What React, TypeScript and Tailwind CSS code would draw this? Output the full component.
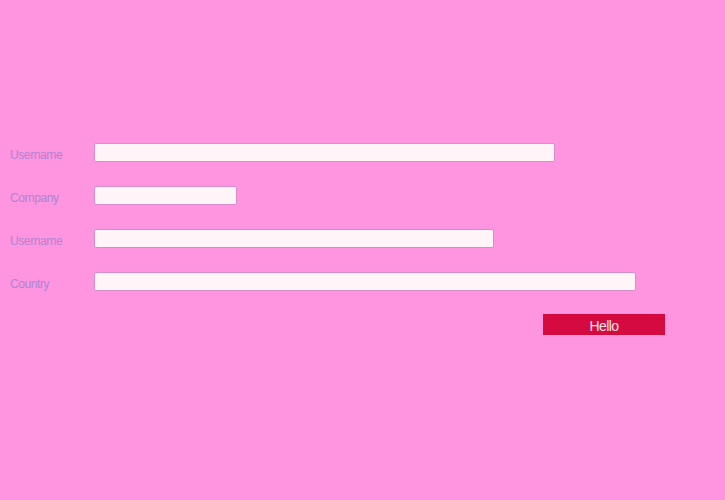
import React from "react";

const rows = [
  { label: "Username", w: "w-[461px]" },
  { label: "Company", w: "w-[143px]" },
  { label: "Username", w: "w-[400px]" },
  { label: "Country", w: "w-[542px]" },
];

export default function App() {
  return (
    <div className="w-[725px] h-[500px] bg-[#ff94e0] pt-[143px] pl-[10px]" style={{ fontFamily: '"Liberation Sans", Arial, sans-serif' }}>
      <div className="flex flex-col gap-[24px]">
        {rows.map((r, i) => (
          <div key={i} className="flex items-center h-[19px]">
            <div className="w-[84px] text-[12px] tracking-[-0.4px] text-[#ab86d2] pt-[4px]">{r.label}</div>
            <div className={`${r.w} h-[19px] bg-[#fff5f8] border border-[#d98ccb] rounded-[2px]`} />
          </div>
        ))}
      </div>
      <div className="mt-[23px] ml-[533px] w-[122px] h-[21px] bg-[#d40a40] text-[#fbe4ee] text-[14px] tracking-[-0.6px] flex items-center justify-center pt-[3px]">
        Hello
      </div>
    </div>
  );
}
